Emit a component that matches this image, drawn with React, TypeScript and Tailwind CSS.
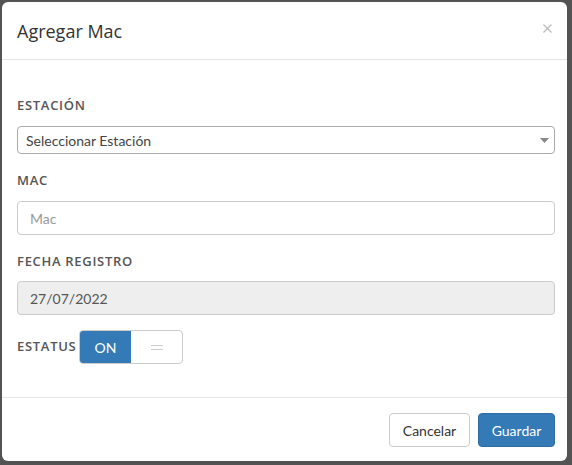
import React from "react";

export default function App() {
  const head = { fontFamily: '"Open Sans", "Noto Sans", sans-serif' };
  const body = { fontFamily: 'Lato, "Liberation Sans", sans-serif' };
  return (
    <div className="w-[572px] h-[465px] bg-[#535353] overflow-hidden pt-[2px] pl-[2px]">
      <div className="w-[565px] h-[459px] bg-white rounded-[6px] flex flex-col">
        <div className="h-[58px] border-b border-[#e5e5e5] flex items-center justify-between pl-[15px] pr-[15px] shrink-0">
          <div className="text-[18px] text-[#333] leading-none mt-[1px]" style={head}>Agregar Mac</div>
          <svg width="9" height="9" viewBox="0 0 9 9" className="mr-[0px] mt-[-4px]">
            <path d="M0.5 0.5 L8.5 8.5 M8.5 0.5 L0.5 8.5" stroke="#bdbdbd" strokeWidth="1.3" />
          </svg>
        </div>
        <div className="flex-1 pl-[15px] pr-[12px] pt-[36px]">
          <div className="text-[13px] font-semibold text-[#555] leading-[19px] tracking-[0.7px]" style={head}>ESTACIÓN</div>
          <div className="mt-[11px] h-[28px] border border-[#aaa] rounded-[4px] flex items-center justify-between pl-[8px] pr-[5px]">
            <span className="text-[14px] text-[#444]" style={body}>Seleccionar Estación</span>
            <svg width="9" height="5" viewBox="0 0 9 5"><path d="M0 0 L9 0 L4.5 5 Z" fill="#888" /></svg>
          </div>
          <div className="mt-[17px] text-[13px] font-semibold text-[#555] leading-[19px] tracking-[0.7px]" style={head}>MAC</div>
          <div className="mt-[11px] h-[34px] border border-[#ccc] rounded-[4px] flex items-center pl-[12px]">
            <span className="text-[14px] text-[#999]" style={body}>Mac</span>
          </div>
          <div className="mt-[17px] text-[13px] font-semibold text-[#555] leading-[19px] tracking-[0.7px]" style={head}>FECHA REGISTRO</div>
          <div className="mt-[10px] h-[34px] border border-[#ccc] bg-[#eee] rounded-[4px] flex items-center pl-[12px]">
            <span className="text-[14px] text-[#555]" style={body}>27/07/2022</span>
          </div>
          <div className="mt-[15px] flex items-center">
            <div className="text-[13px] font-semibold text-[#555] leading-[19px] tracking-[0.7px] w-[62px] mt-[-2px]" style={head}>ESTATUS</div>
            <div className="w-[104px] h-[34px] border border-[#ccc] rounded-[4px] flex overflow-hidden">
              <div className="w-[51px] bg-[#337ab7] text-white text-[14px] flex items-center justify-center" style={body}>ON</div>
              <div className="flex-1 flex items-center justify-center">
                <div className="flex flex-col gap-[3px]">
                  <div className="w-[12px] h-[1px] bg-[#ccc]" />
                  <div className="w-[12px] h-[1px] bg-[#ccc]" />
                </div>
              </div>
            </div>
          </div>
        </div>
        <div className="h-[64px] border-t border-[#e5e5e5] flex items-start justify-end pr-[12px] pt-[15px] gap-[8px] shrink-0">
          <div className="w-[81px] h-[34px] border border-[#ccc] rounded-[4px] flex items-center justify-center text-[14px] text-[#333]" style={body}>Cancelar</div>
          <div className="w-[77px] h-[34px] border border-[#2e6da4] bg-[#337ab7] rounded-[4px] flex items-center justify-center text-[14px] text-white" style={body}>Guardar</div>
        </div>
      </div>
    </div>
  );
}
